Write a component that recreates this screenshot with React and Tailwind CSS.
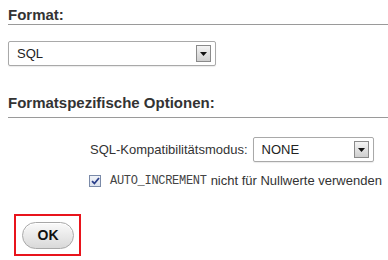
const FONT = { fontFamily: '"Liberation Sans", Arial, sans-serif' }

function DropButton() {
  return (
    <span className="flex h-[17px] w-[15px] items-center justify-center border border-[#8a8a8a] bg-gradient-to-b from-[#f4f4f4] to-[#cfcfcf]">
      <svg width="7" height="4" viewBox="0 0 7 4">
        <path d="M0 0H7L3.5 4Z" fill="#111" />
      </svg>
    </span>
  )
}

function Select({ value, className }) {
  return (
    <div className={`flex h-[25px] items-center justify-between rounded-[2px] border border-[#a9a9a9] bg-white pl-2 pr-[4px] text-[13px] text-[#222] shadow-[0_1px_1px_rgba(0,0,0,0.08)] ${className}`}>
      <span>{value}</span>
      <DropButton />
    </div>
  )
}

function Heading({ children, className = '' }) {
  return (
    <h2 className={`border-b border-[#9a9a9a] pb-[1px] text-[15px] font-bold leading-[17px] text-[#333] ${className}`}>
      {children}
    </h2>
  )
}

export default function App() {
  return (
    <div className="h-[260px] w-[388px] bg-white pl-2 pt-[6px]" style={FONT}>
      <Heading>Format:</Heading>
      <Select value="SQL" className="mt-4 w-[208px]" />

      <Heading className="mt-[28px] pb-[6px]">Formatspezifische Optionen:</Heading>

      <div className="mt-[19px] flex items-center pl-[82px] text-[13px] text-[#333]">
        <span>SQL-Kompatibilitätsmodus:</span>
        <Select value="NONE" className="ml-[5px] w-[121px]" />
      </div>

      <div className="mt-[9px] flex items-center pl-[81px] text-[13px] text-[#333]">
        <span className="flex h-[12px] w-[12px] items-center justify-center border border-[#7a8aa8] bg-gradient-to-b from-[#f0f3f8] to-[#dde3ee]">
          <svg width="9" height="8" viewBox="0 0 9 8">
            <path d="M1 4.2L3.4 6.5L8 1" stroke="#2b3f8a" strokeWidth="1.8" fill="none" />
          </svg>
        </span>
        <span className="ml-[9px] text-[12px] tracking-[-0.3px] text-[#444]" style={{ fontFamily: '"Liberation Mono", "Courier New", monospace' }}>
          AUTO_INCREMENT
        </span>
        <span className="ml-[4px]">nicht für Nullwerte verwenden</span>
      </div>

      <div className="ml-[6px] mt-[23px] inline-block border-2 border-[#e8141c] p-[5px] pl-[6px] pt-[6px]">
        <button className="flex h-[27px] w-[52px] items-center justify-center rounded-full border border-[#a8a8a8] bg-gradient-to-b from-[#fafafa] to-[#d9d9d9] text-[14px] font-bold text-[#111] shadow-[inset_0_1px_0_#fff]">
          OK
        </button>
      </div>
    </div>
  )
}
